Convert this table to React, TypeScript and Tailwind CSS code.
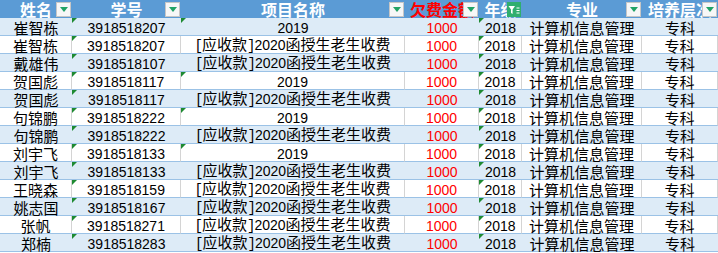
import React from "react";

type Row = { name: string; id: string; proj: boolean; blue: boolean };

const rows: Row[] = [
  { name: "崔智栋", id: "3918518207", proj: false, blue: true },
  { name: "崔智栋", id: "3918518207", proj: true, blue: false },
  { name: "戴雄伟", id: "3918518107", proj: true, blue: true },
  { name: "贺国彪", id: "3918518117", proj: false, blue: false },
  { name: "贺国彪", id: "3918518117", proj: true, blue: true },
  { name: "句锦鹏", id: "3918518222", proj: false, blue: false },
  { name: "句锦鹏", id: "3918518222", proj: true, blue: true },
  { name: "刘宇飞", id: "3918518133", proj: false, blue: false },
  { name: "刘宇飞", id: "3918518133", proj: true, blue: true },
  { name: "王晓森", id: "3918518159", proj: true, blue: false },
  { name: "姚志国", id: "3918518167", proj: true, blue: true },
  { name: "张帆", id: "3918518271", proj: true, blue: false },
  { name: "郑楠", id: "3918518283", proj: true, blue: true },
];

const FilterButton = () => (
  <span className="absolute right-[1px] top-[2px] flex h-[15px] w-[15px] items-center justify-center border border-[#c6c6c6] bg-[#f7f7f7]">
    <svg width="8" height="5" viewBox="0 0 8 5">
      <path d="M0 0 H8 L4 5 Z" fill="#21a366" />
    </svg>
  </span>
);

const ActiveFilter = () => (
  <span className="absolute right-[1px] top-[2px] flex h-[15px] w-[14px] items-center justify-center bg-[#2fae6e]">
    <svg width="12" height="10" viewBox="0 0 12 10">
      <path d="M0.5 1 H7 L4.6 4.4 V9 L3 8 V4.4 Z" fill="#fff" />
      <path d="M8.5 3 H11.5 M8.5 5.5 H11.5 M8.5 8 H11.5" stroke="#fff" strokeWidth="1" />
    </svg>
  </span>
);

const Tri = () => (
  <span className="absolute left-0 top-0 h-0 w-0 border-r-[5px] border-t-[5px] border-r-transparent border-t-[#1e8a32]" />
);

const Header = ({ label, red, active }: { label: string; red?: boolean; active?: boolean }) => (
  <div
    className={`relative flex h-[18px] items-center justify-center overflow-hidden whitespace-nowrap bg-[#5b9bd5] text-[16px] font-bold leading-[18px] ${
      red ? "text-[#ff0000]" : "text-white"
    }`}
  >
    <span>{label}</span>
    {active ? <ActiveFilter /> : <FilterButton />}
  </div>
);

const Num = ({ children }: { children: React.ReactNode }) => (
  <span className="font-['Liberation_Sans',sans-serif] text-[14px]">{children}</span>
);

const Bracket = ({ children }: { children: string }) => (
  <span className="inline-block w-[7.5px] text-center font-['Liberation_Mono',monospace] text-[14px] leading-[17px]">
    {children}
  </span>
);

const Cell = ({
  children,
  blue,
  tri,
  red,
}: {
  children: React.ReactNode;
  blue: boolean;
  tri?: boolean;
  red?: boolean;
}) => (
  <div
    className={`relative flex h-[18px] items-center justify-center whitespace-nowrap border-b border-[#9bc2e6] pt-[1px] text-[15px] leading-[17px] ${
      blue ? "bg-[#ddebf7]" : "border-r border-r-[#d4d4d4] bg-white"
    } ${red ? "text-[#ff0000]" : "text-black"}`}
  >
    {tri && <Tri />}
    <span>{children}</span>
  </div>
);

export default function App() {
  return (
    <div className="h-[253px] w-[718px] overflow-hidden bg-white font-['Noto_Sans_CJK_SC','Noto_Sans',sans-serif]">
      <div className="grid grid-cols-[72px_109px_224px_74px_43px_120px_76px]">
        <Header label="姓名" />
        <Header label="学号" />
        <Header label="项目名称" />
        <Header label="欠费金额" red />
        <Header label="年级" active />
        <Header label="专业" />
        <Header label="培养层次" />
        {rows.map((r, i) => (
          <React.Fragment key={i}>
            <Cell blue={r.blue}>{r.name}</Cell>
            <Cell blue={r.blue} tri>
              <Num>{r.id}</Num>
            </Cell>
            <Cell blue={r.blue} tri={!r.proj}>
              {r.proj ? (
                <>
                  <Bracket>[</Bracket>应收款<Bracket>]</Bracket>
                  <Num>2020</Num>函授生老生收费
                </>
              ) : (
                <Num>2019</Num>
              )}
            </Cell>
            <Cell blue={r.blue} red>
              <Num>1000</Num>
            </Cell>
            <Cell blue={r.blue} tri>
              <Num>2018</Num>
            </Cell>
            <Cell blue={r.blue}>计算机信息管理</Cell>
            <Cell blue={r.blue}>专科</Cell>
          </React.Fragment>
        ))}
      </div>
    </div>
  );
}
